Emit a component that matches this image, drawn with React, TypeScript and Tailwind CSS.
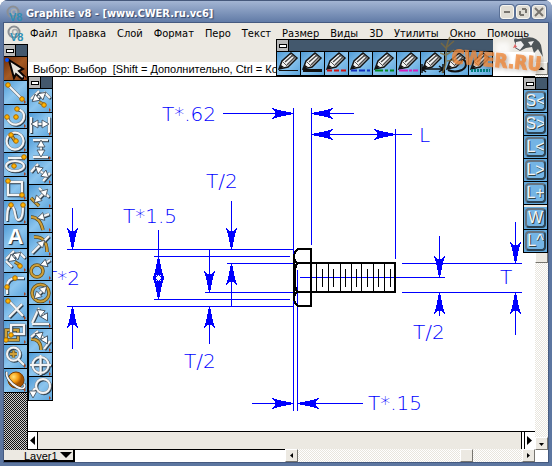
import type { ReactNode } from 'react';

const MENU = ['Файл', 'Правка', 'Слой', 'Формат', 'Перо', 'Текст', 'Размер', 'Виды', '3D', 'Утилиты', 'Окно', 'Помощь'];

type Point = [number, number];

interface Tool {
  name: string;
  line?: string;
  gold?: string;
  dots?: Point[];
  heads?: [number, number, number][];
  letter?: string;
  active?: boolean;
}

// heads are [x, y, angle], the angle being the direction the arrow points in
const DRAW_TOOLS: Tool[] = [
  { name: 'Select', active: true },
  { name: 'Line', line: 'M5 5L18 18', dots: [[4, 4], [18, 18]] },
  { name: 'Arc', line: 'M3 12A8.500 8.500 0 1 0 20 10Q19 5 13 4', dots: [[13, 4], [3, 12], [12, 12]] },
  { name: 'Circle', line: 'M2.500 12a8.500 8.500 0 1 0 17 0a8.500 8.500 0 1 0 -17 0', gold: 'M11 12L7 6', dots: [[12, 12], [7, 6]] },
  { name: 'Ellipse', line: 'M2 13a9 5 0 1 0 18 0a9 5 0 1 0 -18 0M4 5H20', dots: [[10, 13], [20, 4]] },
  { name: 'Rectangle', line: 'M4 5H18V18H4Z', dots: [[4, 4], [18, 18]] },
  { name: 'Spline', line: 'M3 20C3 9 4 5 7 5C12 5 10 19 14 19C18 19 19 14 19 5', dots: [[7, 4], [19, 4]] },
  { name: 'Text', letter: 'A' },
  { name: 'Dimension', line: 'M2 10L10 2M7 10L14 4M15 3L21 9M2 12L8 18', gold: 'M11 13L16 16', dots: [[16, 17]], heads: [[5, 12, 140], [16, 4, -40]] },
  { name: 'Fillet', line: 'M3 21V14Q3 5 12 5H20', dots: [[3, 14], [11, 5]] },
  { name: 'Trim', line: 'M5 4L19 19M18 7L5 20', dots: [[4, 4]] },
  { name: 'Transform', line: 'M7 4H20V13H7Z', gold: 'M2 9H14V19H2Z', dots: [[2, 19], [7, 14]] },
  { name: 'Zoom', line: 'M3 9a6.500 6.500 0 1 0 13 0a6.500 6.500 0 1 0 -13 0M14 14L20 20', gold: 'M6 9H13M9.500 5.500V12.500' },
  { name: 'Render' },
];

const DIMENSION_TOOLS: Tool[] = [
  { name: 'Smart dimension', line: 'M2 10L10 2M7 10L14 4M15 3L21 9', gold: 'M10 13L16 16', dots: [[15, 16]], heads: [[4, 12, 140], [16, 4, -40]] },
  { name: 'Horizontal', line: 'M2 4V20M20 4V20M7 11H15', heads: [[3, 11, 180], [19, 11, 0]] },
  { name: 'Vertical', line: 'M4 3H19M4 20H19M12 8V15', heads: [[12, 4, -90], [12, 19, 90]] },
  { name: 'Aligned', line: 'M2 11L9 3M14 20L21 12M10 9L15 13', heads: [[7, 6, -140], [19, 16, 40]] },
  { name: 'Perpendicular', line: 'M10 3L20 12M9 14L15 8', gold: 'M2 13L10 21', heads: [[6, 17, 135], [18, 5, -45]] },
  { name: 'Base line', line: 'M12 8L20 5', gold: 'M2 8Q11 8 14 21', heads: [[9, 9, 165]] },
  { name: 'Radial', line: 'M3 20L11 12M15 8L20 3', gold: 'M5 4Q18 3 18 19', heads: [[15, 8, -45]] },
  { name: 'Leader', line: 'M15 7L21 3', gold: 'M2 14a6 6 0 1 0 12 0a6 6 0 1 0 -12 0', heads: [[12, 8, 160]] },
  { name: 'Diameter', line: 'M9 14L14 9', gold: 'M3 12a8.500 8.500 0 1 0 17 0a8.500 8.500 0 1 0 -17 0', heads: [[6, 17, 135], [17, 6, -45]] },
  { name: 'Angular', line: 'M3 18L10 3M3 19H20M12 7L16 11', heads: [[9, 5, -140], [18, 15, 60]] },
  { name: 'Arc length', line: 'M2 8L9 2M15 20L21 12M11 6L16 10', gold: 'M2 10Q12 10 12 21', heads: [[7, 5, -160], [18, 14, 60]] },
  { name: 'Center mark', line: 'M3.500 12a8 8 0 1 0 16 0a8 8 0 1 0 -16 0M1 12H22M11.500 2V22' },
  { name: 'Balloon', line: 'M7 9a7 7 0 1 0 14 0a7 7 0 1 0 -14 0M8 11Q4 12 4 15', heads: [[4, 20, 90]] },
];

const PENS = [
  { name: 'Thin', stroke: '#111', width: 1, dash: '' },
  { name: 'Thick', stroke: '#111', width: 3, dash: '' },
  { name: 'Center', stroke: '#d01010', width: 2, dash: '5 2' },
  { name: 'Hidden', stroke: '#1030c0', width: 2, dash: '6 2' },
  { name: 'Phantom', stroke: '#008a20', width: 2, dash: '8 2 3 2' },
  { name: 'Cutting plane', stroke: '#d020c0', width: 2, dash: '9 1 3 1' },
  { name: 'Pen dimension', stroke: '#111', width: 2, dash: '' },
  { name: 'Pen curve', stroke: '#111', width: 2, dash: '' },
  { name: 'Construction', stroke: '#008080', width: 3, dash: '2 1' },
];

const VIEW_TOOLS = ['S<', 'S>', 'L<', 'L>', 'L+'];
const WORK_TOOLS = ['W', 'L^'];

function PaletteHeader() {
  return (
    <div className="flex h-3 shrink-0 border-b border-black bg-[#43586d]">
      <button aria-label="Collapse" className="flex w-3 items-center justify-center border-r border-black bg-[#b8b8b8]">
        <span className="h-1 w-2 border border-black bg-white" />
      </button>
    </div>
  );
}

function Glyph({ tool }: { tool: Tool }) {
  if (tool.active) {
    return (
      <>
        <path d="M5 3L19 12L15 14L21 20L18 22L12 17L10 21Z" fill="#e9e4dc" stroke="#0a0505" strokeWidth="2" />
        <circle cx="3" cy="3" r="2" fill="#0050ff" />
      </>
    );
  }
  if (tool.name === 'Render') {
    return (
      <>
        <circle cx="12" cy="11" r="8" fill="url(#planet)" stroke="#7a3c00" />
        <path d="M3 3C1 7 7 15 13 18S22 19 20 15" fill="none" stroke="#222" strokeWidth="3" />
        <path d="M3 3C1 7 7 15 13 18S22 19 20 15" fill="none" stroke="#f4f4f4" strokeWidth="2" />
      </>
    );
  }
  return (
    <g fill="none">
      {tool.gold && (
        <>
          <path d={tool.gold} stroke="#5b4a1c" strokeWidth="3.500" />
          <path d={tool.gold} stroke="#d0a038" strokeWidth="2" />
        </>
      )}
      {tool.line && (
        <>
          <path d={tool.line} stroke="#2b3b48" strokeWidth="2.500" transform="translate(1 1)" />
          <path d={tool.line} stroke="#7c8a95" strokeWidth="3" />
          <path d={tool.line} stroke="#f4f4f4" strokeWidth="2" />
        </>
      )}
      {tool.heads?.map(([x, y, angle]) => (
        <path
          key={`${x}-${y}`}
          d="M1 0L-6 -4V4Z"
          fill="#fff"
          stroke="#3a4855"
          strokeWidth=".8"
          transform={`translate(${x} ${y}) rotate(${angle})`}
        />
      ))}
      {tool.dots?.map(([x, y]) => (
        <circle key={`${x}-${y}`} cx={x} cy={y} r="2.300" fill="#ffb400" stroke="#a86a08" />
      ))}
    </g>
  );
}

function ToolButton({ tool }: { tool: Tool }) {
  return (
    <button
      aria-label={tool.name}
      className={`h-6 w-full shrink-0 overflow-hidden border-b border-black ${
        tool.active
          ? 'bg-linear-to-br from-[#6b2c0c] via-[#a55a24] to-[#7c3812]'
          : 'bg-linear-to-br from-[#4f9bd6] via-[#8cc5ee] to-[#5ba5dc]'
      }`}
    >
      {tool.letter ? (
        <span className="block font-['Liberation_Sans'] text-[22px] leading-[22px] font-bold text-white [text-shadow:1px_1px_1px_#123]">
          {tool.letter}
        </span>
      ) : (
        <svg viewBox="0 0 23 23" className="block h-[23px] w-[23px]">
          <Glyph tool={tool} />
          <path d="M20 19L22 21L20 23Z" fill="#a8431c" />
        </svg>
      )}
    </button>
  );
}

function PenButton({ pen }: { pen: (typeof PENS)[number] }) {
  return (
    <button
      aria-label={pen.name}
      className="h-6 w-6 border-r border-b border-black bg-linear-to-br from-[#4f9bd6] via-[#8cc5ee] to-[#5ba5dc]"
    >
      <svg viewBox="0 0 23 23" className="block h-[23px] w-[23px]">
        <path d="M2 17L5 9L14 1L20 6L11 15Z" fill="#f3f3f3" stroke="#141414" strokeWidth="1.500" />
        <path d="M8 10L16 3M10 13L18 5" stroke="#4a4a4a" strokeWidth="1.500" />
        <path d="M5 9L11 15M13 2L19 7" stroke="#555" />
        <path d="M2 17L4 13L7 15Z" fill="#111" />
        {pen.name === 'Pen dimension' ? (
          <path d="M1 12V21M22 12V21M1 17H22M5 14L1 17L5 20M18 14L22 17L18 20" fill="none" stroke="#111" strokeWidth="1.500" />
        ) : pen.name === 'Pen curve' ? (
          <path d="M3 18Q10 21 17 18C24 14 20 5 16 9" fill="none" stroke="#111" strokeWidth="2" />
        ) : (
          <path d="M2 18.500H21" stroke={pen.stroke} strokeWidth={pen.width} strokeDasharray={pen.dash || undefined} />
        )}
      </svg>
    </button>
  );
}

function ViewButton({ label }: { label: string }) {
  return (
    <button className="h-[23px] w-full shrink-0 border-b border-black bg-[#63a9dc] p-px">
      <span className="flex h-5 items-center justify-center overflow-hidden rounded-sm border-2 border-[#66737f] border-r-[#2c4252] border-b-[#2c4252] bg-[#74b4e4] font-['Liberation_Sans'] text-[16px] leading-4 text-[#f3f3f3] [text-shadow:1px_1px_0_#344]">
        {label}
      </span>
    </button>
  );
}

function ScrollButton({ label, d }: { label: string; d: string }) {
  return (
    <button
      aria-label={label}
      className="h-[13px] w-[13px] shrink-0 border border-white border-r-[#77756f] border-b-[#77756f] bg-[#ece9e2]"
    >
      <svg viewBox="0 0 11 11" className="block h-[11px] w-[11px]">
        <path d={d} />
      </svg>
    </button>
  );
}

function CaptionButton({ label, children }: { label: string; children: ReactNode }) {
  return (
    <button
      aria-label={label}
      className="h-[14px] w-[14px] rounded-[3px] border border-[#f7f5ef] bg-[#dfdcd4] text-[#77746e] shadow-[0_0_0_1px_#5a7096]"
    >
      <svg viewBox="0 0 12 12" className="block h-3 w-3" fill="none" stroke="currentColor" strokeWidth="2">
        {children}
      </svg>
    </button>
  );
}

function Logo({ className }: { className: string }) {
  return (
    <svg viewBox="0 0 18 18" className={className}>
      <circle cx="7" cy="7" r="5.500" fill="none" stroke="#8b8f94" strokeWidth="2" />
      <circle cx="8" cy="7" r="2.500" fill="none" stroke="#a9adb0" strokeWidth="1.500" />
      <text x="3" y="16" fontFamily="Liberation Sans" fontSize="11" fontWeight="bold" fill="#2f8fb5">
        V8
      </text>
    </svg>
  );
}

const HEADS: [number, number, number][] = [
  [293, 113, 180], [311, 113, 0], [311, 134, 0], [395, 134, 180],
  [72, 249, -90], [231, 249, -90], [231, 263, 90], [209, 292, -90],
  [209, 306, 90], [72, 306, 90], [158, 256, 90], [158, 299, -90],
  [293, 403, 180], [297, 403, 0], [439, 277, -90], [439, 292, 90],
  [515, 263, -90], [515, 292, 90],
];

const LABELS: [string, number, number][] = [
  ['T*.62', 162, 121], ['L', 419, 142], ['T/2', 206, 188], ['T*1.5', 123, 223],
  ['T*2', 45, 285], ['T/2', 184, 368], ['T/2', 413, 339], ['T', 500, 284], ['T*.15', 368, 410],
];

function BoltDrawing() {
  return (
    <svg viewBox="28 77 506 354" className="block h-[354px] w-[506px] max-w-none">
      <g transform="translate(.5 .5)" shapeRendering="crispEdges" fill="none" stroke="#00f">
        <path d="M222 113H293M311 113H353M311 134H411M293 107V410M311 107V244M395 128V258" />
        <path d="M66 249H293M153 256H289M226 263H293M204 292H293M153 299H289M66 306H293" />
        <path d="M72 207V249M72 306V348M158 229V299M231 200V249M231 263V306M209 249V292M209 306V343" />
        <path d="M297 269V410M251 403H293M297 403H362M299 277H444M401 263H521M401 292H521" />
        <path d="M439 235V277M439 292V315M515 221V263M515 292V334" />
        {HEADS.map(([x, y, angle], i) => (
          <path
            key={i}
            d="M1 0L5 -1L15 -3L21 -5L18 -2V2L21 5L15 3L5 1Z"
            fill="#00f"
            transform={`translate(${x} ${y}) rotate(${angle})`}
          />
        ))}
        <path d="M158 274L162 277.500L158 281L154 277.500Z" fill="#fff" />
      </g>
      <g shapeRendering="crispEdges" fill="none" stroke="#000">
        <path
          d="M311 249V306H298L295 303L294 299V256L295 252L298 249ZM294 259L297 263H395V292H297L294 296M297 263L295 269V286L297 292"
          strokeWidth="2"
        />
        <path d="M316.500 263V292M328.500 263V292M340.500 263V292M351.500 263V292M361.500 263V292M373.500 263V292M384.500 263V292" />
        <path d="M322.500 269V287M333.500 269V287M345.500 269V287M356.500 269V287M367.500 269V287M378.500 269V287M390.500 269V287" />
      </g>
      <g fill="#00f" fontFamily="'DejaVu Sans Light', 'DejaVu Sans', sans-serif" fontWeight="200" fontSize="20">
        {LABELS.map(([text, x, y]) => (
          <text key={`${x}-${y}`} x={x} y={y}>
            {text}
          </text>
        ))}
      </g>
    </svg>
  );
}

function Watermark() {
  return (
    <div className="pointer-events-none absolute top-3 right-1 z-20">
      <svg viewBox="0 0 104 42" className="h-[42px] w-[104px]">
        <defs>
          <filter id="soft" x="-20%" y="-20%" width="140%" height="140%">
            <feGaussianBlur stdDeviation="2" />
          </filter>
        </defs>
        <rect x="56" y="7" width="14" height="16" rx="3" fill="#fff" opacity=".7" filter="url(#soft)" />
        <g
          fontFamily="'Liberation Sans Narrow', 'DejaVu Sans Condensed', sans-serif"
          fontSize="19"
          fontWeight="bold"
          transform="rotate(5 12 28)"
        >
          <text x="13" y="30" fill="#3d2b1c" opacity=".45" filter="url(#soft)">
            CWER.RU
          </text>
          <text x="11" y="28" fill="#f08a3c" stroke="#f08a3c" opacity=".8">
            CWER.RU
          </text>
        </g>
        <path d="M2 38C10 27 2 15 10 2M6 13L1 8M7 12L14 6M5 20L0 18M6 20L14 15M7 26L14 25" fill="none" stroke="#806b3b" strokeWidth="1.500" opacity=".8" />
        <path d="M75 8Q72 2 78 4L84 3Q96 0 101 10L103 22L98 14L94 18L92 12L86 13L80 16L75 13Z" fill="#333b40" opacity=".85" />
        <path d="M76 7L81 6L84 10L80 15L75 12ZM88 7L94 6L91 11Z" fill="#eee" />
        <path d="M75 9L77 12L73 13Z" fill="#e06060" />
      </svg>
    </div>
  );
}

export default function App() {
  return (
    <div className="flex h-screen flex-col overflow-hidden rounded-t-lg bg-[#5c76a0] font-['DejaVu_Sans_Condensed','DejaVu_Sans',sans-serif] text-black">
      <svg className="absolute h-0 w-0">
        <defs>
          <radialGradient id="planet" cx=".35" cy=".3">
            <stop offset="0" stopColor="#ffe27a" />
            <stop offset=".6" stopColor="#f59a10" />
            <stop offset="1" stopColor="#a65400" />
          </radialGradient>
        </defs>
      </svg>
      <header className="flex h-[23px] shrink-0 items-center border-t border-[#46597c] bg-linear-to-b from-[#a3b5d3] to-[#5f79a5] pr-[6px] pl-[6px]">
        <Logo className="mt-1 h-[18px] w-[18px]" />
        <h1 className="ml-[2px] flex-1 pt-1 text-[11px] leading-5 font-bold whitespace-nowrap text-white [text-shadow:1px_1px_1px_#33476b]">
          Graphite v8 - [www.CWER.ru.vc6]
        </h1>
        <div className="flex gap-[2px]">
          <CaptionButton label="Minimize">
            <path d="M3 6H9" />
          </CaptionButton>
          <CaptionButton label="Restore">
            <path d="M3 9V5M3 9H7M9 3H5M9 3V7" />
          </CaptionButton>
          <CaptionButton label="Close">
            <path d="M2 2L10 10M10 2L2 10" />
          </CaptionButton>
        </div>
      </header>

      <main className="relative mx-1 mb-1 flex min-h-0 flex-1 flex-col bg-[#ece9e2] shadow-[0_0_0_1px_#455a80]">
        <nav className="flex h-[21px] shrink-0 items-center gap-[11px] pl-[3px] text-[11px]">
          <Logo className="-mr-[6px] h-[18px] w-[18px] shrink-0" />
          {MENU.map((item) => (
            <button key={item} className="leading-4 whitespace-nowrap">
              {item}
            </button>
          ))}
        </nav>

        <div className="flex min-h-0 flex-1">
          <aside className="flex w-6 shrink-0 flex-col overflow-hidden border-t border-r border-black bg-[repeating-conic-gradient(#111_0_25%,#ccc_0_50%)] bg-[length:2px_2px]">
            <PaletteHeader />
            {DRAW_TOOLS.map((tool) => (
              <ToolButton key={tool.name} tool={tool} />
            ))}
          </aside>

          <section className="flex min-w-0 flex-1 flex-col">
            <div className="flex h-[18px] shrink-0 items-end justify-end">
              <div className="h-[10px] w-10 bg-white" />
            </div>
            <p className="h-[15px] shrink-0 overflow-hidden border-b border-black bg-white pl-[5px] font-['Liberation_Sans',sans-serif] text-[11px] leading-[14px] whitespace-pre">
              {'Выбор: Выбор  [Shift = Дополнительно, Ctrl = Контекст]'}
            </p>
            <div className="relative min-h-0 flex-1 overflow-hidden bg-white">
              <BoltDrawing />
              <div className="absolute top-0 left-0 flex w-[25px] flex-col border-r border-l border-black">
                <PaletteHeader />
                {DIMENSION_TOOLS.map((tool) => (
                  <ToolButton key={tool.name} tool={tool} />
                ))}
              </div>
            </div>
            <div className="flex h-[19px] shrink-0 border-t border-b border-black">
              <button aria-label="Previous view" className="w-[10px] border-r border-black bg-white">
                <svg viewBox="0 0 9 17" className="block h-[17px] w-[9px]">
                  <path d="M7 4V13L2 8.500Z" />
                </svg>
              </button>
              <div className="flex-1" />
              <div className="w-1 border-r border-l border-black bg-white" />
              <button aria-label="Next view" className="w-[10px] bg-white">
                <svg viewBox="0 0 10 17" className="block h-[17px] w-[10px]">
                  <path d="M2 4V13L7 8.500Z" />
                </svg>
              </button>
            </div>
          </section>

          <div className="mt-[18px] flex w-[13px] shrink-0 flex-col bg-[repeating-conic-gradient(#fff_0_25%,#e9e6de_0_50%)] bg-[length:2px_2px]">
            <ScrollButton label="Scroll up" d="M2 7H9L5.500 4Z" />
            <div className="flex-1" />
            <div className="h-[13px] border border-white border-r-[#77756f] border-b-[#77756f] bg-[#ece9e2]" />
            <div className="flex-1" />
            <ScrollButton label="Scroll down" d="M3 5H8L5.500 8Z" />
          </div>
        </div>

        <footer className="flex h-3 shrink-0 bg-white">
          <div className="relative w-[71px] shrink-0 border-r-2 border-b-2 border-black bg-[#ece9e2]">
            <select
              aria-label="Layer"
              className="block h-[10px] w-full appearance-none overflow-hidden pl-5 font-['Liberation_Sans',sans-serif] text-[11px] leading-[12px] outline-none"
            >
              <option>Layer1</option>
            </select>
            <svg viewBox="0 0 12 6" className="pointer-events-none absolute top-[2px] right-[1px] h-[6px] w-3">
              <path d="M0 0H12L6 6Z" />
            </svg>
          </div>
          <div className="flex-1" />
          <div className="-mt-px flex w-[46%] bg-[repeating-conic-gradient(#fff_0_25%,#e9e6de_0_50%)] bg-[length:2px_2px]">
            <ScrollButton label="Scroll left" d="M7 3V8L4 5.500Z" />
            <div className="flex-1" />
            <div className="mr-[49px] w-[13px] border border-white border-r-[#77756f] border-b-[#77756f] bg-[#ece9e2]" />
            <ScrollButton label="Scroll right" d="M4 3V8L7 5.500Z" />
          </div>
          <div className="w-[13px] shrink-0" />
        </footer>

        <div className="absolute top-4 right-[55px] z-10 border-t border-l border-black">
          <PaletteHeader />
          <div className="flex">
            {PENS.map((pen) => (
              <PenButton key={pen.name} pen={pen} />
            ))}
          </div>
        </div>

        <div className="absolute top-[54px] right-0 z-10 flex w-[25px] flex-col border border-b-0 border-black">
          <PaletteHeader />
          {VIEW_TOOLS.map((label) => (
            <ViewButton key={label} label={label} />
          ))}
          <div className="h-[2px] bg-[#ece9e2]" />
          {WORK_TOOLS.map((label) => (
            <ViewButton key={label} label={label} />
          ))}
        </div>

        <Watermark />
      </main>
    </div>
  );
}
